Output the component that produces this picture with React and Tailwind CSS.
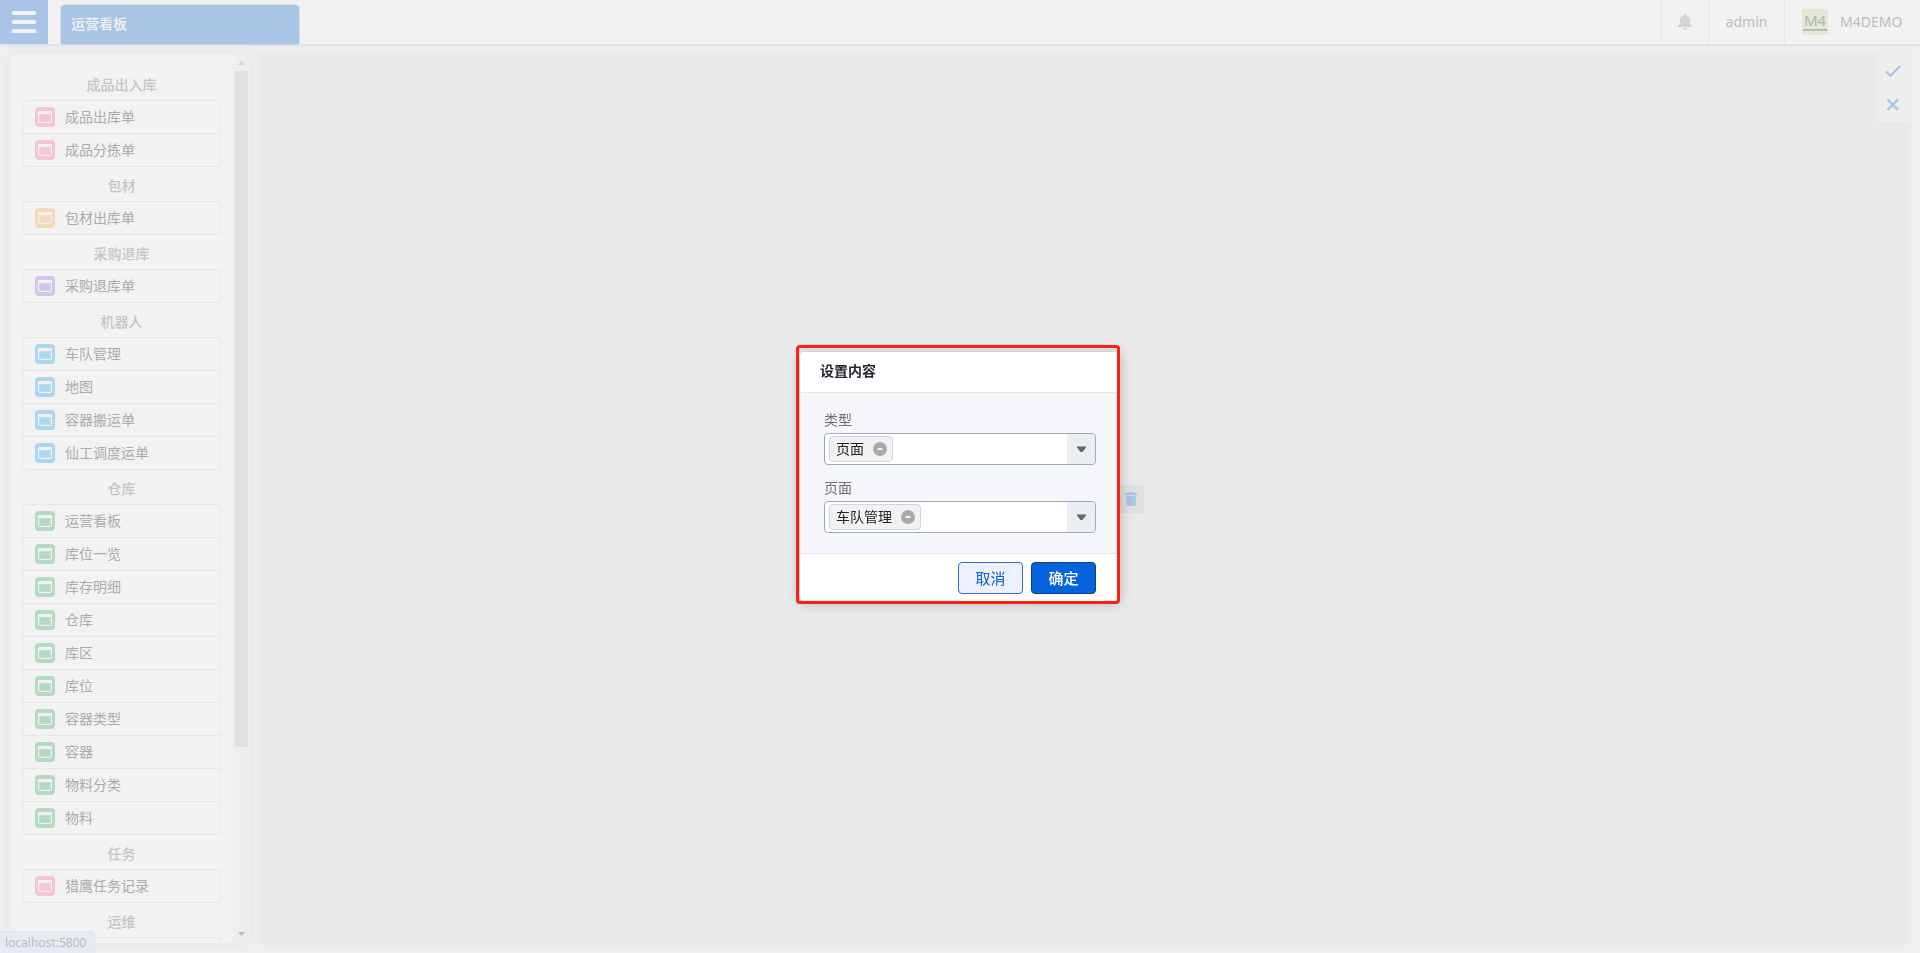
import React, { useState } from "react";

const groups = [
  { title: "成品出入库", color: "text-[#f3c6d1]", items: ["成品出库单", "成品分拣单"] },
  { title: "包材", color: "text-[#f2d9b9]", items: ["包材出库单"] },
  { title: "采购退库", color: "text-[#d2c5ee]", items: ["采购退库单"] },
  {
    title: "机器人",
    color: "text-[#abd7f0]",
    items: ["车队管理", "地图", "容器搬运单", "仙工调度运单"],
  },
  {
    title: "仓库",
    color: "text-[#b3dac2]",
    items: [
      "运营看板",
      "库位一览",
      "库存明细",
      "仓库",
      "库区",
      "库位",
      "容器类型",
      "容器",
      "物料分类",
      "物料",
    ],
  },
  { title: "任务", color: "text-[#f3c6d1]", items: ["猎鹰任务记录"] },
  { title: "运维", color: "text-[#abd7f0]", items: [""] },
];

const PageIcon = ({ className }) => (
  <svg className={"h-5 w-5 shrink-0 " + className} viewBox="0 0 20 20">
    <rect width="20" height="20" rx="4" fill="currentColor" />
    <rect x="3.5" y="4.5" width="13" height="11" rx="1" fill="none" stroke="#f2f2f2" />
    <rect x="3" y="4" width="14" height="3" rx="1" fill="#f2f2f2" />
    <rect x="4.5" y="7.5" width="11" height="7" fill="none" stroke="#f2f2f2" strokeOpacity="0.2" />
  </svg>
);

const Header = () => (
  <header className="relative z-10 flex h-11 shrink-0 bg-[#f2f2f2] shadow-[0_1px_3px_#d3d8de]">
    <button type="button" aria-label="menu" className="flex w-12 items-center justify-center bg-[#a9c5e8]">
      <svg className="h-6 w-6" viewBox="0 0 24 24" fill="#f2f2f2">
        <rect y="1" width="24" height="4" rx="1.5" />
        <rect y="10" width="24" height="4" rx="1.5" />
        <rect y="19" width="24" height="4" rx="1.5" />
      </svg>
    </button>
    <button
      type="button"
      className="ml-[13px] mt-[5px] w-[238px] rounded-t bg-[#a9c5e6] px-[10px] pb-[2px] text-left text-sm font-medium text-[#f2f2f2] shadow-[0_0_2px_#b4bccb]"
    >
      运营看板
    </button>
    <div className="ml-auto flex items-center text-sm text-[#bdbdbd]">
      <button
        type="button"
        aria-label="notifications"
        className="flex h-full w-[47px] items-center justify-center border-l border-[#e6e6e6]"
      >
        <svg className="h-4 w-[14px]" viewBox="0 0 14 16" fill="#d3d3d3">
          <path d="M6 1.4V1a1 1 0 0 1 2 0v.4c2.3.5 4 2.400 4 4.800v3.500l2 2.300v1H0v-1l2-2.300V6.200c0-2.400 1.700-4.300 4-4.800z" />
          <path d="M5 14h4a2 2 0 0 1-4 0z" />
        </svg>
      </button>
      <button type="button" className="h-full w-[76px] border-l border-[#e6e6e6]">
        admin
      </button>
      <div className="flex h-full w-[136px] items-center gap-3 border-l border-[#e6e6e6] pl-[17px]">
        <svg className="h-[26px] w-[26px]" viewBox="0 0 26 26">
          <rect width="26" height="26" fill="#e2ead6" />
          <text x="13" y="17" textAnchor="middle" fontSize="15" fill="#b0b4be">
            M4
          </text>
          <rect x="1" y="20" width="24" height="2" fill="#b6bac3" />
        </svg>
        M4DEMO
      </div>
    </div>
  </header>
);

const Sidebar = () => (
  <aside className="flex w-60 shrink-0 overflow-hidden rounded bg-[#f2f2f2] shadow-[0_0_9px_#e3e6ec]">
    <nav className="min-w-0 flex-1 overflow-hidden p-3">
      {groups.map((g) => (
        <section key={g.title}>
          <h3 className="h-[34px] pt-1 text-center text-sm leading-[30px] font-medium text-[#c5c5c5]">
            {g.title}
          </h3>
          <ul className="divide-y divide-[#e7e7e7] rounded border border-[#e7e7e7]">
            {g.items.map((item) => (
              <li key={item} className="flex h-8 items-center gap-[10px] px-3 not-last:box-content">
                <PageIcon className={g.color} />
                <span className="text-sm text-[#acacac]">{item}</span>
              </li>
            ))}
          </ul>
        </section>
      ))}
    </nav>
    {/* scroll bar */}
    <div className="flex w-[17px] flex-col items-center bg-[#eeeeee]">
      <svg className="h-[17px] w-[17px] shrink-0" viewBox="0 0 17 17">
        <path d="M5 11h7L8.500 7z" fill="#d6d6d6" />
      </svg>
      <div className="h-[76%] w-[13px] bg-[#e0e0e0]" />
      <svg className="mt-auto h-[17px] w-[17px] shrink-0" viewBox="0 0 17 17">
        <path d="M5 6h7l-3.500 4z" fill="#bababa" />
      </svg>
    </div>
  </aside>
);

const Board = () => (
  <main className="relative flex flex-1 items-center justify-center rounded bg-[#e9e9e9] shadow-[0_0_6px_#e5e7ec]">
    <div className="flex h-7 w-[118px] items-center justify-end rounded bg-[#dfdfdf] pr-[7px]">
      <button type="button" aria-label="delete">
        <svg className="h-[14px] w-3" viewBox="0 0 12 14" fill="#a9c5e8">
          <path d="M4 0h4l.6 1H12v2H0V1h3.400z" />
          <path d="M1 4h10l-.6 9a1 1 0 0 1-1 1H2.600a1 1 0 0 1-1-1z" />
        </svg>
      </button>
    </div>
    <div className="absolute right-0 top-0 flex w-[34px] flex-col bg-[#eeeeee]">
      <button type="button" aria-label="confirm" className="flex h-[34px] items-center justify-center">
        <svg className="h-4 w-4" viewBox="0 0 16 16" fill="none" stroke="#a9c5e8" strokeWidth="2.200">
          <path d="M.7 8.200l4.800 4.600L15.300 3" />
        </svg>
      </button>
      <button type="button" aria-label="close" className="flex h-[34px] items-center justify-center">
        <svg className="h-4 w-4" viewBox="0 0 16 16" fill="none" stroke="#a9c5e8" strokeWidth="2.400">
          <path d="M2.500 2.500l10.500 10.500M13 2.500L2.500 13" />
        </svg>
      </button>
    </div>
  </main>
);

const TagSelect = ({ id, label, options, initial }) => {
  const [value, setValue] = useState(initial);
  return (
    <div>
      <label htmlFor={id} className="block h-6 text-sm leading-[22px] text-[#707070]">
        {label}
      </label>
      <div className="flex h-8 items-center rounded border border-[#a0a9b8] bg-white pl-1">
        {value && (
          <span className="flex h-[26px] shrink-0 items-center gap-[9px] rounded border border-[#ccd5e8] bg-[#f2f2f2] pl-[6px] pr-[5px] text-sm text-[#222222]">
            {value}
            <button type="button" aria-label="remove" onClick={() => setValue("")}>
              <svg className="block h-[14px] w-[14px]" viewBox="0 0 14 14">
                <circle cx="7" cy="7" r="7" fill="#aaaaaa" />
                <rect x="4.500" y="6" width="5" height="2" fill="#f2f2f2" />
              </svg>
            </button>
          </span>
        )}
        <div className="relative h-full min-w-0 flex-1">
          <select
            id={id}
            value=""
            onChange={(e) => setValue(e.target.value)}
            className="h-full w-full appearance-none bg-transparent outline-none"
          >
            <option value=""></option>
            {options.map((o) => (
              <option key={o} value={o}>
                {o}
              </option>
            ))}
          </select>
          <span className="pointer-events-none absolute inset-y-0 right-0 flex w-7 items-center justify-center rounded-r bg-[#ebeff1]">
            <svg className="h-[6px] w-[9px]" viewBox="0 0 9 6" fill="#666666">
              <path d="M0 .5h9v1L5.500 6h-2L0 1.500z" />
            </svg>
          </span>
        </div>
      </div>
    </div>
  );
};

const SettingDialog = () => (
  <div className="fixed inset-0 z-20 flex items-center justify-center">
    <div
      role="dialog"
      aria-label="设置内容"
      className="relative w-80 rounded bg-white shadow-[0_2px_12px_rgba(0,0,0,0.25)]"
    >
      <h2 className="h-10 px-5 text-sm leading-[38px] font-bold text-[#222831]">设置内容</h2>
      <div className="flex flex-col gap-3 border-y border-[#e2e8ee] bg-[#f4f6fa] px-6 pt-4 pb-5">
        <TagSelect id="type" label="类型" initial="页面" options={["页面"]} />
        <TagSelect id="page" label="页面" initial="车队管理" options={groups[3].items} />
      </div>
      <div className="flex justify-end gap-2 px-6 pt-2 pb-[7px]">
        <button
          type="button"
          className="h-8 w-[65px] rounded border border-[#3a62e8] bg-[#edf0fd] text-[15px] text-[#0a60d8]"
        >
          取消
        </button>
        <button
          type="button"
          className="h-8 w-[65px] rounded border border-[#06438f] bg-[#0564dc] text-[15px] font-medium text-white"
        >
          确定
        </button>
      </div>
      {/* highlight frame */}
      <div className="pointer-events-none absolute -top-[7px] right-0 -bottom-[3px] -left-1 rounded border-3 border-[#fd1f13]" />
    </div>
  </div>
);

const App = () => {
  return (
    <div className="flex h-screen w-full flex-col overflow-hidden bg-[#eeefef] font-['Noto_Sans','Noto_Sans_CJK_SC',sans-serif]">
      <Header />
      <div className="flex min-h-0 flex-1 gap-[9px] p-[10px]">
        <Sidebar />
        <Board />
      </div>
      <div className="fixed bottom-0 left-0 z-10 h-[22px] rounded-tr border-t border-r border-[#dfe3e8] bg-[#e6ebf2] pr-2 pl-[5px] text-xs leading-[22px] text-[#b9bcc0]">
        localhost:5800
      </div>
      <SettingDialog />
    </div>
  );
};

export default App;
